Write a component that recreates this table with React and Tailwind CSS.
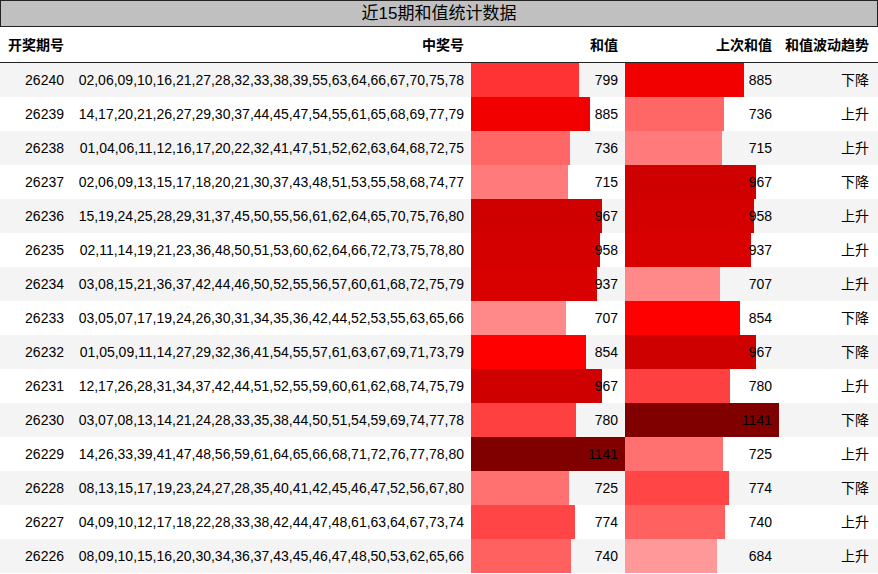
const rows = [
  ["26240", "02,06,09,10,16,21,27,28,32,33,38,39,55,63,64,66,67,70,75,78", 799, 885, "下降"],
  ["26239", "14,17,20,21,26,27,29,30,37,44,45,47,54,55,61,65,68,69,77,79", 885, 736, "上升"],
  ["26238", "01,04,06,11,12,16,17,20,22,32,41,47,51,52,62,63,64,68,72,75", 736, 715, "上升"],
  ["26237", "02,06,09,13,15,17,18,20,21,30,37,43,48,51,53,55,58,68,74,77", 715, 967, "下降"],
  ["26236", "15,19,24,25,28,29,31,37,45,50,55,56,61,62,64,65,70,75,76,80", 967, 958, "上升"],
  ["26235", "02,11,14,19,21,23,36,48,50,51,53,60,62,64,66,72,73,75,78,80", 958, 937, "上升"],
  ["26234", "03,08,15,21,36,37,42,44,46,50,52,55,56,57,60,61,68,72,75,79", 937, 707, "上升"],
  ["26233", "03,05,07,17,19,24,26,30,31,34,35,36,42,44,52,53,55,63,65,66", 707, 854, "下降"],
  ["26232", "01,05,09,11,14,27,29,32,36,41,54,55,57,61,63,67,69,71,73,79", 854, 967, "下降"],
  ["26231", "12,17,26,28,31,34,37,42,44,51,52,55,59,60,61,62,68,74,75,79", 967, 780, "上升"],
  ["26230", "03,07,08,13,14,21,24,28,33,35,38,44,50,51,54,59,69,74,77,78", 780, 1141, "下降"],
  ["26229", "14,26,33,39,41,47,48,56,59,61,64,65,66,68,71,72,76,77,78,80", 1141, 725, "上升"],
  ["26228", "08,13,15,17,19,23,24,27,28,35,40,41,42,45,46,47,52,56,67,80", 725, 774, "下降"],
  ["26227", "04,09,10,12,17,18,22,28,33,38,42,44,47,48,61,63,64,67,73,74", 774, 740, "上升"],
  ["26226", "08,09,10,15,16,20,30,34,36,37,43,45,46,47,48,50,53,62,65,66", 740, 684, "上升"],
];

// bar colour per sum value, darker = larger
const colors = {
  1141: "#800000",
  967: "#cf0000",
  958: "#d40000",
  937: "#d90000",
  885: "#f20000",
  854: "#ff0000",
  799: "#ff3333",
  780: "#ff4040",
  774: "#ff4545",
  740: "#ff6161",
  736: "#ff6666",
  725: "#ff7070",
  715: "#ff7b7b",
  707: "#ff8888",
  684: "#ff9999",
};

const MAX = 1141;

function BarCell({ value }) {
  return (
    <div className="relative h-[34px] flex items-center justify-end pr-[7px]">
      <div
        className="absolute left-0 top-0 h-full"
        style={{ width: Math.round((value / MAX) * 154), background: colors[value] }}
      />
      <span className="relative">{value}</span>
    </div>
  );
}

export default function App() {
  return (
    <div
      className="w-[878px] h-[574px] bg-white text-black text-[14px] overflow-hidden"
      style={{ fontFamily: '"Liberation Sans", "Noto Sans CJK SC", sans-serif' }}
    >
      <div className="h-[27px] bg-[#c0c0c0] border border-[#222] flex items-center justify-center text-[17px] leading-none">
        近15期和值统计数据
      </div>
      <div className="grid grid-cols-[72px_399px_154px_154px_99px] h-[36px] border-b border-[#222] font-bold items-center pt-px">
        <div className="pl-2">开奖期号</div>
        <div className="text-right pr-[7px]">中奖号</div>
        <div className="text-right pr-[7px]">和值</div>
        <div className="text-right pr-[7px]">上次和值</div>
        <div className="text-right pr-[9px]">和值波动趋势</div>
      </div>
      {rows.map((r, i) => (
        <div
          key={r[0]}
          className={
            "grid grid-cols-[72px_399px_154px_154px_99px] h-[34px] items-center " +
            (i % 2 === 0 ? "bg-[#f4f4f4]" : "bg-white")
          }
        >
          <div className="text-right pr-2">{r[0]}</div>
          <div className="text-right pr-[7px] whitespace-nowrap">{r[1]}</div>
          <BarCell value={r[2]} />
          <BarCell value={r[3]} />
          <div className="text-right pr-[9px]">{r[4]}</div>
        </div>
      ))}
    </div>
  );
}
